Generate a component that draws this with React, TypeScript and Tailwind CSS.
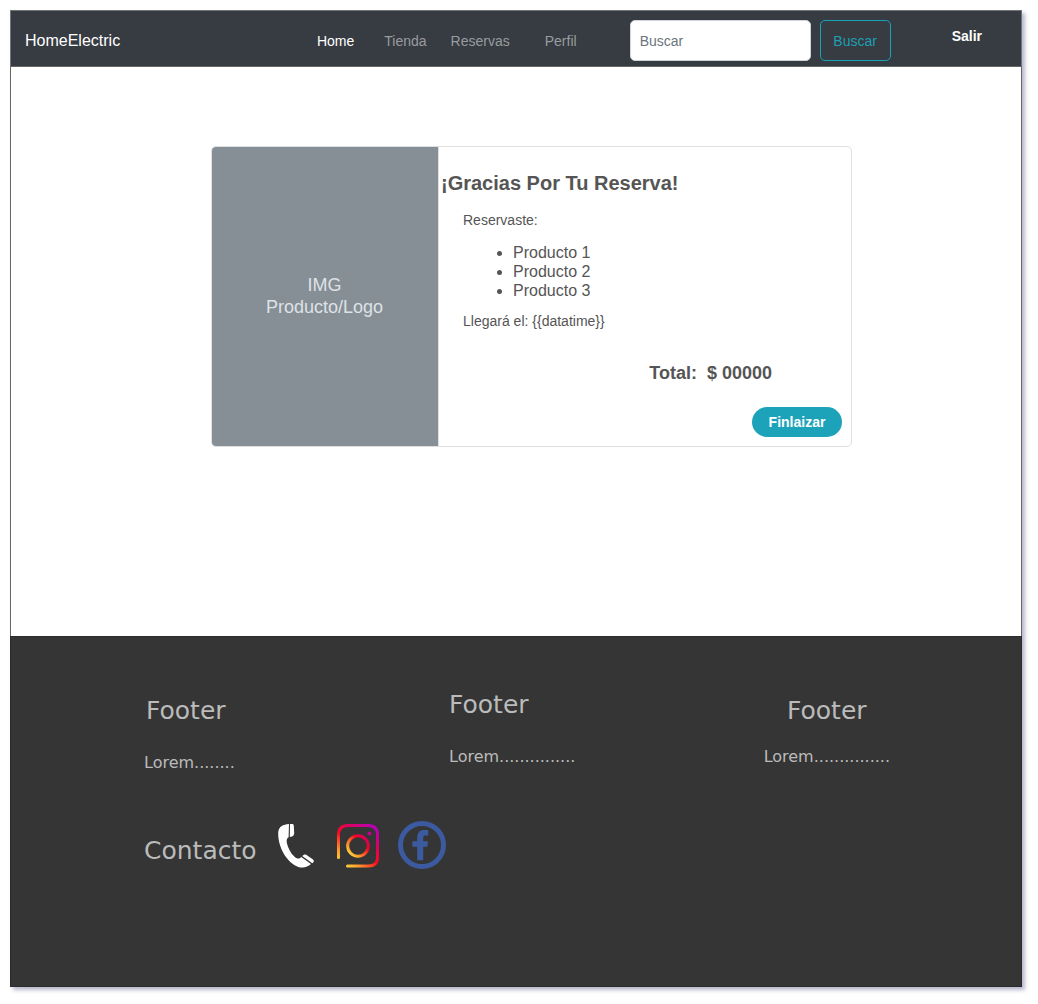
const navLinks = [
  { label: "Tienda", spacing: "ml-[30px]" },
  { label: "Reservas", spacing: "ml-6" },
  { label: "Perfil", spacing: "ml-[35px]" },
];

const products = ["Producto 1", "Producto 2", "Producto 3"];

function PhoneIcon() {
  return (
    <svg viewBox="0 0 38 46" className="h-[46px] w-[38px]" fill="#fff" aria-hidden="true">
      <path d="M9.8 1.3C4.3 2 1.3 5.2 1.2 10.3C1 18.5 4.2 28 9.7 35C14.3 41 20.3 44.8 25.8 44.6C28.7 44.5 31.4 43.3 34 41.1L24.2 34C22.3 36.2 20 36.2 17.3 33.6C13.6 30 10.7 24.5 9.7 19.2C9.5 16.6 10 14.8 11.6 14.2L12 1.1Z" />
      <path d="M13 1.1L15.6 1.1Q16.8 1.3 16.8 2.8L17.2 10.5Q17.2 12.6 15.1 13.5L12.8 14.1Z" />
      <path d="M25.2 33L27.3 31.6Q29 31.4 31 33L36 36.6Q37.4 37.8 36.6 38.9L35.3 40.2Z" />
    </svg>
  );
}

function InstagramIcon() {
  return (
    <svg viewBox="0 0 44 46" className="h-[46px] w-11" fill="none" aria-hidden="true">
      <defs>
        <linearGradient id="ig" gradientUnits="userSpaceOnUse" x1="5" y1="42" x2="36" y2="3">
          <stop offset="0" stopColor="#ffdd35" />
          <stop offset="0.2" stopColor="#ff9a2e" />
          <stop offset="0.47" stopColor="#fb0c20" />
          <stop offset="0.68" stopColor="#e60050" />
          <stop offset="1" stopColor="#b900b4" />
        </linearGradient>
        <linearGradient id="igLens" gradientUnits="userSpaceOnUse" x1="13" y1="32" x2="31" y2="14">
          <stop offset="0" stopColor="#ffe03b" />
          <stop offset="0.5" stopColor="#ff4a20" />
          <stop offset="0.7" stopColor="#f00024" />
          <stop offset="1" stopColor="#d2006b" />
        </linearGradient>
      </defs>
      <path
        d="M2.5 34.5V12Q2.5 2.5 12 2.5H32Q41.5 2.5 41.5 12V34.5Q41.5 43 32 43H11.5"
        stroke="url(#ig)"
        strokeWidth="3"
        strokeLinecap="round"
      />
      <circle cx="22" cy="23" r="10.3" stroke="url(#igLens)" strokeWidth="3" />
      <circle cx="33.5" cy="10.5" r="2" fill="#c3008e" />
    </svg>
  );
}

function FacebookIcon() {
  return (
    <svg viewBox="0 0 48 48" className="size-12" aria-hidden="true">
      <circle cx="24" cy="24" r="21.5" fill="none" stroke="#3c5a9f" strokeWidth="5" />
      <path
        fill="#3c5a9f"
        d="M19.2 39.2V25.8H14.4V20.2H19.2V16.2C19.2 11.6 22 9 26.2 9H30.2V14.5H27.6C25.8 14.5 25.2 15.3 25.2 17V20.2H30L29.3 25.8H25.2V39.2Z"
      />
    </svg>
  );
}

export default function App() {
  return (
    <div className="bg-white pt-[10px] pr-4 pb-[17px] pl-[10px] font-['Liberation_Sans',Arial,sans-serif] text-sm">
      <div className="shadow-[3px_3px_4px_#b8b8ce]">
        <header className="flex h-[57px] items-center border border-[#727678] border-b-[#666] bg-[#373b42] pt-1 pr-[39px] pl-[14px]">
          <a href="#" className="text-base text-white">
            HomeElectric
          </a>
          <nav className="ml-auto flex items-center text-[#999c9f]">
            <a href="#" className="text-white">
              Home
            </a>
            {navLinks.map((link) => (
              <a key={link.label} href="#" className={link.spacing}>
                {link.label}
              </a>
            ))}
          </nav>
          <form className="ml-[53px] flex gap-[9px]" onSubmit={(e) => e.preventDefault()}>
            <input
              type="search"
              aria-label="Buscar"
              placeholder="Buscar"
              className="h-[41px] w-[181px] rounded-[5px] border border-[#ced4da] bg-white px-[9px] text-gray-700 placeholder:text-[#6c757d]"
            />
            <button
              type="submit"
              className="h-[41px] w-[71px] rounded-[5px] border border-[#17a2b8] text-[#1e9fb3]"
            >
              Buscar
            </button>
          </form>
          <a href="#" className="mb-2.5 ml-[61px] font-bold text-white">
            Salir
          </a>
        </header>

        <main className="min-h-[569px] border-x border-[#666] bg-white pt-[79px] pr-[169px] pl-[200px] text-[#555]">
          <section className="flex min-h-[301px] overflow-hidden rounded-[5px] border border-[#dfdfdf]">
            <div className="flex w-[227px] shrink-0 items-center justify-center border-r border-[#dfdfdf] bg-[#868e96] pr-px pb-0.5 text-center text-lg leading-[22px] text-[#dee2e6]">
              <p>
                IMG
                <br />
                Producto/Logo
              </p>
            </div>
            <div className="flex grow flex-col pt-6 pr-[9px] pb-[9px] pl-[2px]">
              <h1 className="text-xl leading-6 font-bold">¡Gracias Por Tu Reserva!</h1>
              <div className="pl-[22px]">
                <p className="mt-[15px] leading-5">Reservaste:</p>
                <ul className="mt-[13px] list-disc pl-[50px] text-base leading-[19px]">
                  {products.map((product) => (
                    <li key={product}>{product}</li>
                  ))}
                </ul>
                <p className="mt-[11px] leading-5">Llegará el: {"{{datatime}}"}</p>
              </div>
              <p className="mt-[30px] mr-[70px] flex justify-end gap-[10px] text-lg leading-6 font-bold">
                <span>Total:</span>
                <span>$ 00000</span>
              </p>
              <button
                type="button"
                className="mt-auto h-[30px] w-[90px] self-end rounded-full bg-[#1ca3b9] font-bold text-white"
              >
                Finlaizar
              </button>
            </div>
          </section>
        </main>

        <footer className="min-h-[351px] border border-[#2b2b2b] bg-[#353535] pt-[52px] pr-[131px] pl-[133px] font-['DejaVu_Sans',Verdana,sans-serif] text-base text-[#bbb]">
          <div className="flex items-start">
            <section className="mt-1.5 w-[305px]">
              <h2 className="pl-0.5 text-[25px] leading-8">Footer</h2>
              <p className="mt-6 leading-6">Lorem........</p>
            </section>
            <section>
              <h2 className="text-[25px] leading-8">Footer</h2>
              <p className="mt-6 leading-6">Lorem...............</p>
            </section>
            <section className="mt-1.5 ml-auto">
              <h2 className="text-center text-[25px] leading-8">Footer</h2>
              <p className="mt-[18px] leading-6">Lorem...............</p>
            </section>
          </div>
          <section className="mt-[46px] flex items-center">
            <h2 className="mt-3 text-[25px] leading-8">Contacto</h2>
            <a href="#" aria-label="Teléfono" className="mt-0.5 ml-5">
              <PhoneIcon />
            </a>
            <a href="#" aria-label="Instagram" className="mt-0.5 ml-[21px]">
              <InstagramIcon />
            </a>
            <a href="#" aria-label="Facebook" className="ml-[18px]">
              <FacebookIcon />
            </a>
          </section>
        </footer>
      </div>
    </div>
  );
}
